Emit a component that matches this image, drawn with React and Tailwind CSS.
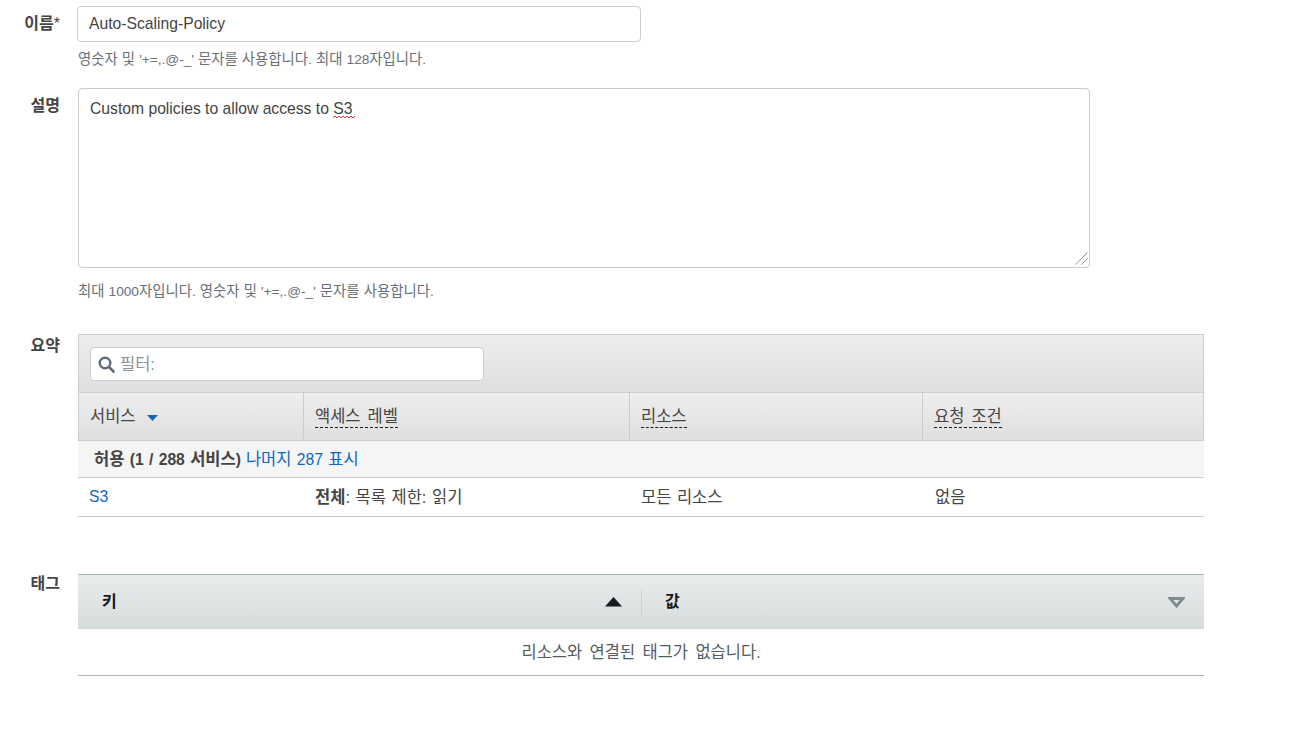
const font = { fontFamily: '"Liberation Sans", "Noto Sans CJK KR", sans-serif' };

function Mix({ children }) {
  return children.split(/([가-힣]+)/).map((part, i) =>
    i % 2 === 1 ? <span key={i}>{part}</span> : <span key={i} className="text-[0.95em]">{part}</span>
  );
}

function Label({ children }) {
  return <div className="w-[60px] shrink-0 text-right text-[16px] font-bold leading-[20px] text-[#444]">{children}</div>;
}

function Dotted({ children }) {
  return <span className="inline-block border-b border-dashed border-[#16191f] leading-[21px] [word-spacing:2.5px]">{children}</span>;
}

export default function App() {
  return (
    <div style={font} className="h-[747px] w-[1315px] overflow-hidden bg-white text-[16.5px] text-[#444] [word-spacing:1px]">
      <div className="flex pt-[6px]">
        <div className="pt-[8px]"><Label>이름<span className="font-normal">*</span></Label></div>
        <div className="ml-[17px]">
          <input readOnly value="Auto-Scaling-Policy" style={font} className="block h-[36px] w-[564px] rounded-[4px] border border-[#ccc] bg-white px-[11px] text-[15.7px] text-[#444] outline-none [word-spacing:0]" />
          <div className="ml-[1px] mt-[8px] h-[18px] text-[14.4px] leading-[18px] text-[#687078] [word-spacing:0.3px]"><Mix>{"영숫자 및 '+=,.@-_' 문자를 사용합니다. 최대 128자입니다."}</Mix></div>
        </div>
      </div>

      <div className="flex pt-[20px]">
        <div className="pt-[8px]"><Label>설명</Label></div>
        <div className="ml-[18px]">
          <div className="relative">
            <textarea readOnly spellCheck={false} value="Custom policies to allow access to S3" style={font} className="block h-[180px] w-[1012px] resize-none rounded-[4px] border border-[#ccc] bg-white px-[11px] py-[10px] text-[15.7px] leading-[20px] text-[#444] outline-none [word-spacing:0]" />
            <svg className="absolute left-[255px] top-[27px]" width="22" height="4" viewBox="0 0 22 4">
              <path d="M0 2.5 L2 1 L4 3 L6 1 L8 3 L10 1 L12 3 L14 1 L16 3 L18 1 L20 3 L22 1" fill="none" stroke="#e02020" strokeWidth="0.9" />
            </svg>
            <svg className="absolute left-[997px] top-[164px]" width="13" height="13" viewBox="0 0 13 13">
              <path d="M0.5 12.5 L12.5 0.5 M6.5 12.5 L12.5 6.5" fill="none" stroke="#555" strokeWidth="1" strokeDasharray="1 0.5" />
            </svg>
          </div>
          <div className="mt-[14px] h-[18px] text-[14.4px] leading-[18px] text-[#687078] [word-spacing:0.3px]"><Mix>{"최대 1000자입니다. 영숫자 및 '+=,.@-_' 문자를 사용합니다."}</Mix></div>
        </div>
      </div>

      <div className="flex pt-[34px]">
        <div className="pt-[2px]"><Label>요약</Label></div>
        <div className="ml-[18px] w-[1126px]">
          <div className="flex h-[59px] items-start border border-[#ccc] bg-gradient-to-b from-[#eeeeee] to-[#dfdfdf] pl-[11px] pt-[12px]">
            <div className="flex h-[34px] w-[394px] items-center rounded-[4px] border border-[#ccc] bg-white pl-[7px]">
              <svg width="17" height="17" viewBox="0 0 17 17" fill="none">
                <circle cx="7" cy="7" r="5.3" stroke="#5f6b7a" strokeWidth="2.4" />
                <path d="M11 11 L15.5 15.5" stroke="#5f6b7a" strokeWidth="2.6" strokeLinecap="round" />
              </svg>
              <span className="ml-[5px] text-[#879596]">필터:</span>
            </div>
          </div>
          <div className="flex h-[48px] border-x border-b border-[#ccc] bg-gradient-to-b from-[#eeeeee] to-[#dfdfdf] text-[#444]">
            <div className="flex w-[224px] items-center pl-[11px]">
              <span>서비스</span>
              <svg className="ml-[11px] mt-[2px]" width="11" height="6" viewBox="0 0 11 6"><path d="M0 0 H11 L5.5 6 Z" fill="#1166bb" /></svg>
            </div>
            <div className="flex w-[326px] items-center border-l border-[#ccc] pl-[11px]"><Dotted>액세스 레벨</Dotted></div>
            <div className="flex w-[293px] items-center border-l border-[#ccc] pl-[11px]"><Dotted>리소스</Dotted></div>
            <div className="flex flex-1 items-center border-l border-[#ccc] pl-[11px]"><Dotted>요청 조건</Dotted></div>
          </div>
          <div className="flex h-[37px] items-center border-b border-[#ccc] bg-[#f5f5f5] pl-[16px]">
            <span className="font-bold"><Mix>허용 (1 / 288 서비스)</Mix></span>
            <span className="ml-[5px] text-[#0f68bd]"><Mix>나머지 287 표시</Mix></span>
          </div>
          <div className="flex h-[39px] items-center border-b border-[#ccc]">
            <div className="w-[237px] pl-[11px] text-[15.7px] text-[#0f68bd]">S3</div>
            <div className="w-[326px]"><span className="font-bold">전체</span>: 목록 제한: 읽기</div>
            <div className="w-[294px]">모든 리소스</div>
            <div>없음</div>
          </div>
        </div>
      </div>

      <div className="flex pt-[57px]">
        <div><Label>태그</Label></div>
        <div className="ml-[18px] w-[1126px]">
          <div className="flex h-[55px] items-center border-t border-[#a9b5b5] bg-gradient-to-b from-[#e9ecec] to-[#d5dbdb] text-[#16191f]">
            <div className="flex h-[27px] w-[564px] items-center justify-between border-r border-[#ccd2d2] pl-[24px] pr-[19px]">
              <span className="text-[16px] font-bold">키</span>
              <svg width="17" height="10" viewBox="0 0 17 10"><path d="M8.5 0 L17 9.5 H0 Z" fill="#16191f" /></svg>
            </div>
            <div className="flex h-[27px] flex-1 items-center justify-between pl-[23px] pr-[19px]">
              <span className="text-[16px] font-bold">값</span>
              <svg width="17" height="11" viewBox="0 0 17 11"><path d="M2 1.5 H15 L8.5 9 Z" fill="none" stroke="#7d8b8c" strokeWidth="2.8" /></svg>
            </div>
          </div>
          <div className="flex h-[47px] items-center justify-center border-b border-[#aab7b8] text-[#545b64] [word-spacing:3px]"><span><Mix>리소스와 연결된 태그가 없습니다.</Mix></span></div>
        </div>
      </div>
    </div>
  );
}
